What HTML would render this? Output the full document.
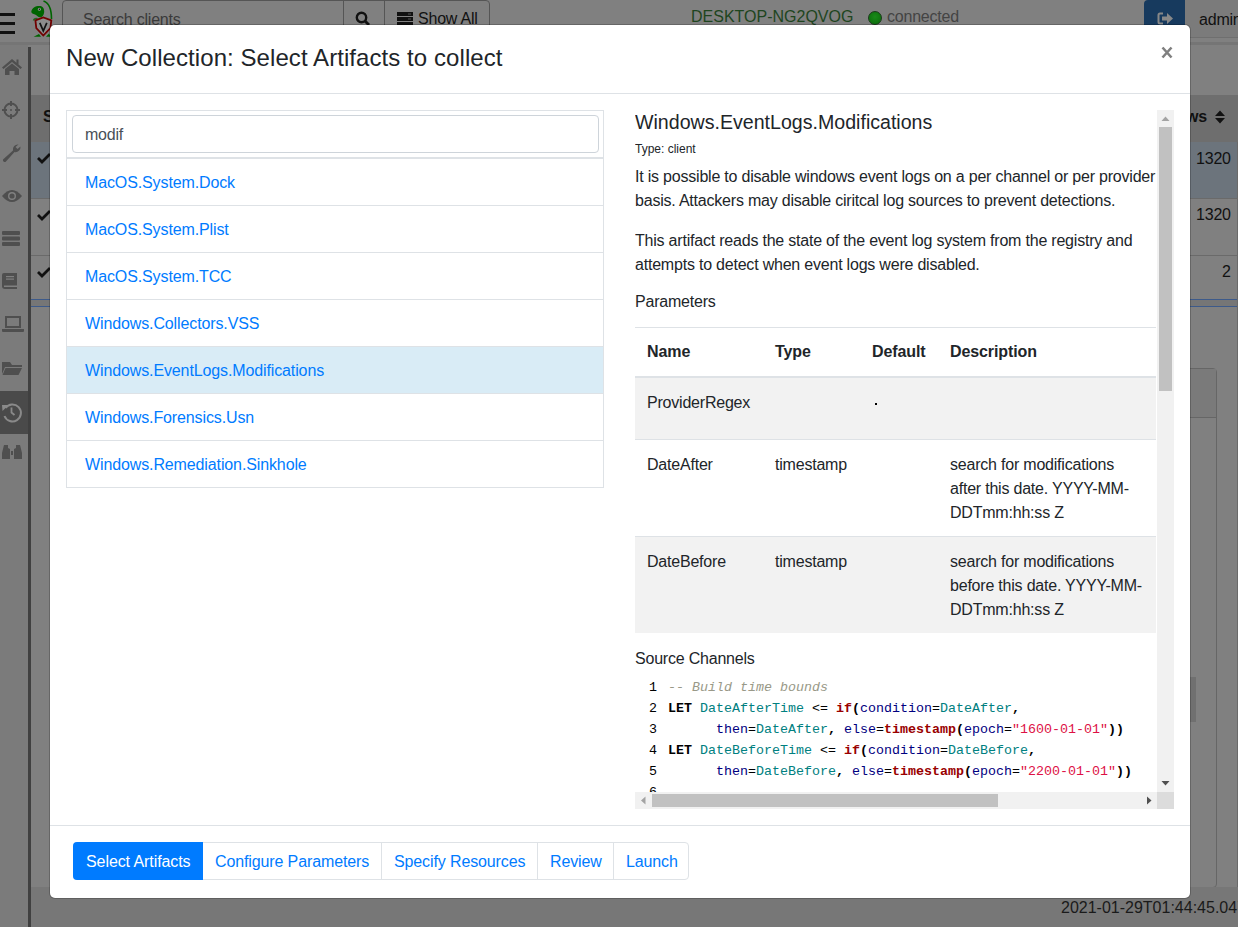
<!DOCTYPE html>
<html><head><meta charset="utf-8">
<style>
*{box-sizing:border-box;margin:0;padding:0}
html,body{width:1238px;height:927px;overflow:hidden;background:#fff;font-family:"Liberation Sans",sans-serif;color:#212529}
.a{position:absolute}
.t{position:absolute;white-space:nowrap;line-height:24px;font-size:16px;letter-spacing:-0.21px}
#overlay{position:absolute;left:0;top:0;width:1238px;height:927px;background:rgba(0,0,0,.5)}
#modal{position:absolute;left:50px;top:25px;width:1140px;height:873px;background:#fff;border-radius:5px;box-shadow:0 0 0 1px rgba(0,0,0,.2)}
.hl{position:absolute;height:1px;background:#dee2e6}
.vl{position:absolute;width:1px;background:#dee2e6}
.lnk{color:#007bff;letter-spacing:-0.12px}
.code{position:absolute;font-family:"Liberation Mono",monospace;font-size:13.33px;line-height:21px;white-space:pre;color:#000}
.cm{color:#999988;font-style:italic}
.kw{font-weight:bold;color:#000}
.vr{color:#008080}
.fn{font-weight:bold;color:#990000}
.nv{color:#000080}
.st{color:#dd1144}
.th{font-weight:bold;font-size:16px;letter-spacing:-0.1px}
</style></head><body>
<div id="bg" class="a" style="left:0;top:0;width:1238px;height:927px;overflow:hidden;background:#808080">
  <!-- navbar -->
  <div class="a" style="left:0;top:13px;width:15px;height:3px;background:#111"></div>
  <div class="a" style="left:0;top:22px;width:15px;height:3px;background:#111"></div>
  <div class="a" style="left:0;top:31px;width:15px;height:3px;background:#111"></div>
  <svg class="a" style="left:30px;top:0" width="24" height="40" viewBox="0 0 24 40">
    <path d="M13.5 1 C18 2.5 21.5 8 21.5 19" stroke="#006400" stroke-width="1.6" fill="none"/>
    <path d="M1.3 11.5 C2 8 5 6 9.5 6 C13 6 14.3 8.5 14.2 12 C14 15.5 12 17.3 10 17.3 C8 17.3 7 15.5 5 14.5 C3 14 1.3 13.5 1.3 11.5 Z" fill="#006400"/>
    <circle cx="9.4" cy="9.3" r="1.5" fill="#9a9a9a"/><circle cx="9.4" cy="9.3" r="0.7" fill="#111"/>
    <path d="M3.5 20.5 C4 18.7 6 18.3 7.5 18.8" stroke="#1f6a1f" stroke-width="1.5" fill="none"/>
    <path d="M3.6 36.8 L9 34 L11 36.8 Z M16 36.8 L19 33.5 L20.5 36.8 Z" fill="#006400"/>
    <path d="M5.4 20.4 L13.3 17.5 L21.3 20.4 L20.4 28 L13.3 35.5 L6.3 28 Z" fill="#8c8c8c" stroke="#700000" stroke-width="1.8"/>
    <path d="M9.8 22.8 L13.3 30.8 L16.8 22.8" stroke="#111" stroke-width="1.7" fill="none"/>
  </svg>
  <div class="a" style="left:62px;top:0;width:282px;height:44px;border:1px solid #555;border-radius:4px 0 0 4px"></div>
  <div class="t" style="left:83px;top:8px;color:#3a3a3a">Search clients</div>
  <div class="a" style="left:343px;top:0;width:42px;height:44px;border:1px solid #555"></div>
  <svg class="a" style="left:355px;top:11px" width="16" height="16" viewBox="0 0 16 16"><circle cx="6.5" cy="6.5" r="4.7" stroke="#111" stroke-width="2.4" fill="none"/><path d="M10 10 L14 14" stroke="#111" stroke-width="2.8"/></svg>
  <div class="a" style="left:384px;top:0;width:106px;height:44px;border:1px solid #555;border-radius:0 4px 4px 0"></div>
  <svg class="a" style="left:397px;top:12px" width="16" height="14" viewBox="0 0 16 14"><rect x="0" y="0" width="16" height="4" fill="#111"/><rect x="0" y="5" width="16" height="4" fill="#111"/><rect x="0" y="10" width="16" height="4" fill="#111"/><rect x="11" y="1.5" width="3" height="1" fill="#555"/><rect x="11" y="6.5" width="3" height="1" fill="#555"/></svg>
  <div class="t" style="left:418px;top:7px;color:#111">Show All</div>
  <div class="t" style="left:691px;top:5px;color:#1e451e;font-size:16px;letter-spacing:0">DESKTOP-NG2QVOG</div>
  <div class="a" style="left:868px;top:11px;width:14px;height:14px;border-radius:50%;background:radial-gradient(circle at 50% 40%,#1a8a1a,#0a6a0a);border:1px solid #1a3a1a"></div>
  <div class="t" style="left:887px;top:5px;color:#444">connected</div>
  <div class="a" style="left:1144px;top:0;width:41px;height:42px;background:#173a5e;border-radius:4px 0 0 0"></div>
  <svg class="a" style="left:1157px;top:12px" width="17" height="13" viewBox="0 0 17 13"><path d="M6 1.5 H3 Q1.5 1.5 1.5 3 V10 Q1.5 11.5 3 11.5 H6" stroke="#888" stroke-width="2" fill="none"/><path d="M5 4.5 H10 V1 L16 6.5 L10 12 V8.5 H5 Z" fill="#888"/></svg>
  <div class="a" style="left:1185px;top:0;width:53px;height:37px;background:#7b7b7b"></div>
  <div class="a" style="left:1185px;top:37px;width:53px;height:1px;background:#6f6f6f"></div>
  <div class="t" style="left:1199px;top:8px;color:#111">admin</div>
  <div class="a" style="left:0;top:42px;width:1238px;height:3px;background:#757575"></div>
  <!-- sidebar -->
  <div class="a" style="left:0;top:45px;width:28px;height:882px;background:#7b7b7b"></div>
  <div class="a" style="left:28px;top:47px;width:3px;height:880px;background:#404040"></div>
  <div class="a" style="left:0;top:391px;width:28px;height:43px;background:#4a4a4a"></div>
  <svg class="a" style="left:0;top:45px" width="28" height="430" viewBox="0 0 28 430" fill="#4f4f4f">
    <!-- home -->
    <path d="M12 14 L2 22.5 L3.5 24 L12 17 L20.5 24 L22 22.5 L18.5 19.5 V14.5 H16.5 V17.8 Z"/>
    <path d="M5 24 L12 18.5 L19 24 V30 H14.5 V26 H9.5 V30 H5 Z"/>
    <!-- crosshair -->
    <circle cx="11" cy="65" r="6.5" stroke="#4f4f4f" stroke-width="2" fill="none"/>
    <path d="M11 56 V61 M11 69 V74 M2 65 H7 M15 65 H20" stroke="#4f4f4f" stroke-width="2"/>
    <circle cx="11" cy="65" r="1"/>
    <!-- wrench -->
    <path d="M18.5 99.5 A5 5 0 0 0 13 105.5 L3 114.5 A2 2 0 0 0 5.5 117 L14.5 107 A5 5 0 0 0 20.5 101.5 L17.5 104 L15.5 102 Z"/>
    <!-- eye -->
    <path d="M2 151 Q12 139 22 151 Q12 163 2 151 Z"/>
    <circle cx="12" cy="151" r="4" fill="#808080"/><circle cx="12" cy="151" r="2.6"/>
    <!-- server -->
    <rect x="2" y="186" width="18" height="4" rx="1"/><rect x="2" y="191.5" width="18" height="4" rx="1"/><rect x="2" y="197" width="18" height="4" rx="1"/>
    <!-- book -->
    <path d="M4 228 H17 V244 H5 Q2 244 2 241 V230 Q2 228 4 228 Z"/>
    <rect x="6" y="231" width="8" height="1.2" fill="#808080"/><rect x="6" y="233.5" width="8" height="1.2" fill="#808080"/><rect x="4" y="240.5" width="13" height="1.5" fill="#808080"/>
    <!-- laptop -->
    <path d="M5 271 H21 V283 H5 Z M7 273 V281 H19 V273 Z" fill-rule="evenodd"/>
    <path d="M2 284 H24 V286 Q24 287 23 287 H3 Q2 287 2 286 Z"/>
    <!-- folder -->
    <path d="M2 317 V329 L5 322 H22 V320 H12 L10 317 Z"/>
    <path d="M5.5 323 H22 L18.5 330 H2.5 Z"/>
    <!-- binoculars -->
    <path d="M4 400 H8 V403 L10 404 V414 H2 V408 Z M14 404 L16 403 V400 H20 L22 408 V414 H14 Z M11 406 H13 V410 H11 Z"/>
  </svg>
  <svg class="a" style="left:0;top:400px" width="28" height="30" viewBox="0 0 28 30">
    <path d="M5.5 8 A8.5 8.5 0 1 1 4.5 16" stroke="#8a8a8a" stroke-width="2" fill="none"/>
    <path d="M2 5 L8.5 5 L2.5 11 Z" fill="#8a8a8a"/>
    <path d="M11.5 7.5 V12.5 L14.5 15" stroke="#8a8a8a" stroke-width="1.8" fill="none"/>
  </svg>
  <!-- main table -->
  <div class="a" style="left:31px;top:95px;width:1207px;height:47px;background:#6e6e6e"></div>
  <div class="a" style="left:31px;top:142px;width:1207px;height:56px;background:#6c747c"></div>
  <div class="a" style="left:31px;top:198px;width:1207px;height:1px;background:#6a6a6a"></div>
  <div class="a" style="left:31px;top:255px;width:1207px;height:1px;background:#6a6a6a"></div>
  <div class="t" style="left:43px;top:105px;color:#111;font-weight:bold">S</div>
  <svg class="a" style="left:36px;top:150px" width="16" height="135" viewBox="0 0 16 135" fill="none" stroke="#111" stroke-width="2.8">
    <path d="M2 8 L6 12 L14 4"/><path d="M2 65 L6 69 L14 61"/><path d="M2 122 L6 126 L14 118"/>
  </svg>
  <div class="t" style="left:1186px;top:105px;color:#111;font-weight:bold">ws</div>
  <svg class="a" style="left:1214px;top:110px" width="12" height="14" viewBox="0 0 12 14" fill="#111"><path d="M1 6 L6 0.5 L11 6 Z M1 8 L11 8 L6 13.5 Z"/></svg>
  <div class="t" style="left:1196px;top:147px;color:#111">1320</div>
  <div class="t" style="left:1196px;top:203px;color:#111">1320</div>
  <div class="t" style="left:1222px;top:260px;color:#111">2</div>
  <div class="a" style="left:31px;top:299px;width:1207px;height:8px;background:#767676;border-top:1px solid #3d5a8a;border-bottom:1px solid #3d5a8a"></div>
  <!-- card right -->
  <div class="a" style="left:1000px;top:368px;width:217px;height:520px;border:1px solid #666;border-radius:4px;background:#808080"></div>
  <div class="a" style="left:1001px;top:369px;width:215px;height:49px;background:#7a7a7a;border-bottom:1px solid #666"></div>
  <div class="a" style="left:1190px;top:677px;width:6px;height:45px;background:#707070"></div>
  <div class="a" style="left:1237px;top:142px;width:1px;height:745px;background:#6a6a6a"></div>
  <!-- footer -->
  <div class="a" style="left:31px;top:887px;width:1207px;height:40px;background:#777"></div>
  <div class="a" style="left:28px;top:887px;width:3px;height:40px;background:#404040"></div>
  <div class="t" style="left:1061px;top:896px;color:#1a1a1a;font-size:16px;letter-spacing:0">2021-01-29T01:44:45.047</div>
</div>


<div id="modal"></div>
<!-- header -->
<div class="t" style="left:66px;top:46px;font-size:24px;line-height:24px;letter-spacing:0.07px">New Collection: Select Artifacts to collect</div>
<svg class="a" style="left:1160px;top:45px" width="14" height="15"><path d="M2.5 2.5 L11.5 12.5 M11.5 2.5 L2.5 12.5" stroke="#808080" stroke-width="2.6"/></svg>
<div class="hl" style="left:50px;top:93px;width:1140px"></div>

<!-- left panel -->
<div class="a" style="left:66px;top:110px;width:538px;height:378px;border:1px solid #dee2e6"></div>
<div class="a" style="left:72px;top:115px;width:527px;height:38px;border:1px solid #ced4da;border-radius:4px"></div>
<div class="t" style="left:85px;top:123px;color:#495057">modif</div>
<div class="a" style="left:67px;top:157px;width:536px;height:2px;background:#dee2e6"></div>
<div class="a" style="left:67px;top:347px;width:536px;height:46px;background:#d9ecf6"></div>
<div class="hl" style="left:67px;top:205px;width:536px"></div>
<div class="hl" style="left:67px;top:252px;width:536px"></div>
<div class="hl" style="left:67px;top:299px;width:536px"></div>
<div class="hl" style="left:67px;top:346px;width:536px"></div>
<div class="hl" style="left:67px;top:393px;width:536px"></div>
<div class="hl" style="left:67px;top:440px;width:536px"></div>
<div class="t lnk" style="left:85px;top:171px">MacOS.System.Dock</div>
<div class="t lnk" style="left:85px;top:218px">MacOS.System.Plist</div>
<div class="t lnk" style="left:85px;top:265px">MacOS.System.TCC</div>
<div class="t lnk" style="left:85px;top:312px">Windows.Collectors.VSS</div>
<div class="t lnk" style="left:85px;top:359px">Windows.EventLogs.Modifications</div>
<div class="t lnk" style="left:85px;top:406px">Windows.Forensics.Usn</div>
<div class="t lnk" style="left:85px;top:453px">Windows.Remediation.Sinkhole</div>

<!-- right panel -->
<div class="a" style="left:635px;top:110px;width:522px;height:682px;overflow:hidden">
  <div class="t" style="left:0;top:0px;font-size:19.6px;letter-spacing:0">Windows.EventLogs.Modifications</div>
  <div class="t" style="left:0;top:27px;font-size:12px;letter-spacing:0">Type: client</div>
  <div class="t" style="left:0;top:55px">It is possible to disable windows event logs on a per channel or per provider</div>
  <div class="t" style="left:0;top:79px">basis. Attackers may disable ciritcal log sources to prevent detections.</div>
  <div class="t" style="left:0;top:119px">This artifact reads the state of the event log system from the registry and</div>
  <div class="t" style="left:0;top:143px">attempts to detect when event logs were disabled.</div>
  <div class="t" style="left:0;top:180px">Parameters</div>
  <!-- table -->
  <div class="hl" style="left:0;top:217px;width:521px"></div>
  <div class="t th" style="left:12px;top:230px">Name</div>
  <div class="t th" style="left:140px;top:230px">Type</div>
  <div class="t th" style="left:237px;top:230px">Default</div>
  <div class="t th" style="left:315px;top:230px">Description</div>
  <div class="a" style="left:0;top:266px;width:521px;height:2px;background:#dee2e6"></div>
  <div class="a" style="left:0;top:268px;width:521px;height:61px;background:#f2f2f2"></div>
  <div class="hl" style="left:0;top:329px;width:521px"></div>
  <div class="hl" style="left:0;top:426px;width:521px"></div>
  <div class="a" style="left:0;top:427px;width:521px;height:96px;background:#f2f2f2"></div>
  <div class="t" style="left:12px;top:281px">ProviderRegex</div>
  <div class="a" style="left:240px;top:293px;width:2px;height:2px;background:#000"></div>
  <div class="t" style="left:12px;top:343px">DateAfter</div>
  <div class="t" style="left:140px;top:343px">timestamp</div>
  <div class="t" style="left:315px;top:343px">search for modifications</div>
  <div class="t" style="left:315px;top:367px">after this date. YYYY-MM-</div>
  <div class="t" style="left:315px;top:391px">DDTmm:hh:ss Z</div>
  <div class="t" style="left:12px;top:440px">DateBefore</div>
  <div class="t" style="left:140px;top:440px">timestamp</div>
  <div class="t" style="left:315px;top:440px">search for modifications</div>
  <div class="t" style="left:315px;top:464px">before this date. YYYY-MM-</div>
  <div class="t" style="left:315px;top:488px">DDTmm:hh:ss Z</div>
  <div class="t" style="left:0;top:537px">Source Channels</div>
  <!-- code -->
  <div class="code" style="left:14px;top:567px;color:#000">1
2
3
4
5
6</div>
  <div class="code" style="left:33px;top:567px"><span class="cm">-- Build time bounds</span>
<span class="kw">LET</span> <span class="vr">DateAfterTime</span> &lt;= <span class="fn">if</span><span class="kw">(</span><span class="nv">condition</span>=<span class="vr">DateAfter</span><span class="kw">,</span>
      <span class="nv">then</span>=<span class="vr">DateAfter</span><span class="kw">,</span> <span class="nv">else</span>=<span class="fn">timestamp</span><span class="kw">(</span><span class="nv">epoch</span>=<span class="st">"1600-01-01"</span><span class="kw">))</span>
<span class="kw">LET</span> <span class="vr">DateBeforeTime</span> &lt;= <span class="fn">if</span><span class="kw">(</span><span class="nv">condition</span>=<span class="vr">DateBefore</span><span class="kw">,</span>
      <span class="nv">then</span>=<span class="vr">DateBefore</span><span class="kw">,</span> <span class="nv">else</span>=<span class="fn">timestamp</span><span class="kw">(</span><span class="nv">epoch</span>=<span class="st">"2200-01-01"</span><span class="kw">))</span>
</div>
</div>
<!-- scrollbars -->
<div class="a" style="left:1157px;top:110px;width:17px;height:682px;background:#f1f1f1"></div>
<div class="a" style="left:1159px;top:127px;width:13px;height:264px;background:#c1c1c1"></div>
<svg class="a" style="left:1157px;top:110px" width="17" height="17"><path d="M4.5 11 L8.5 6.5 L12.5 11 Z" fill="#a3a3a3"/></svg>
<svg class="a" style="left:1157px;top:775px" width="17" height="17"><path d="M4.5 6 L12.5 6 L8.5 10.5 Z" fill="#505050"/></svg>
<div class="a" style="left:635px;top:792px;width:522px;height:17px;background:#f1f1f1"></div>
<div class="a" style="left:652px;top:794px;width:346px;height:13px;background:#c1c1c1"></div>
<svg class="a" style="left:635px;top:792px" width="17" height="17"><path d="M10.5 4.5 L6 8.5 L10.5 12.5 Z" fill="#a3a3a3"/></svg>
<svg class="a" style="left:1140px;top:792px" width="17" height="17"><path d="M7 4.5 L11.5 8.5 L7 12.5 Z" fill="#505050"/></svg>
<div class="a" style="left:1157px;top:792px;width:17px;height:17px;background:#dcdcdc"></div>

<!-- footer -->
<div class="hl" style="left:50px;top:825px;width:1140px"></div>
<div class="a" style="left:73px;top:842px;width:616px;height:38px;border:1px solid #dee2e6;border-radius:4px"></div>
<div class="a" style="left:73px;top:842px;width:130px;height:38px;background:#007bff;border-radius:4px 0 0 4px"></div>
<div class="vl" style="left:381px;top:842px;height:38px"></div>
<div class="vl" style="left:537px;top:842px;height:38px"></div>
<div class="vl" style="left:613px;top:842px;height:38px"></div>
<div class="t" style="left:86px;top:850px;color:#fff;letter-spacing:-0.08px">Select Artifacts</div>
<div class="t lnk" style="left:215px;top:850px">Configure Parameters</div>
<div class="t lnk" style="left:394px;top:850px">Specify Resources</div>
<div class="t lnk" style="left:550px;top:850px">Review</div>
<div class="t lnk" style="left:626px;top:850px">Launch</div>
</body></html>
